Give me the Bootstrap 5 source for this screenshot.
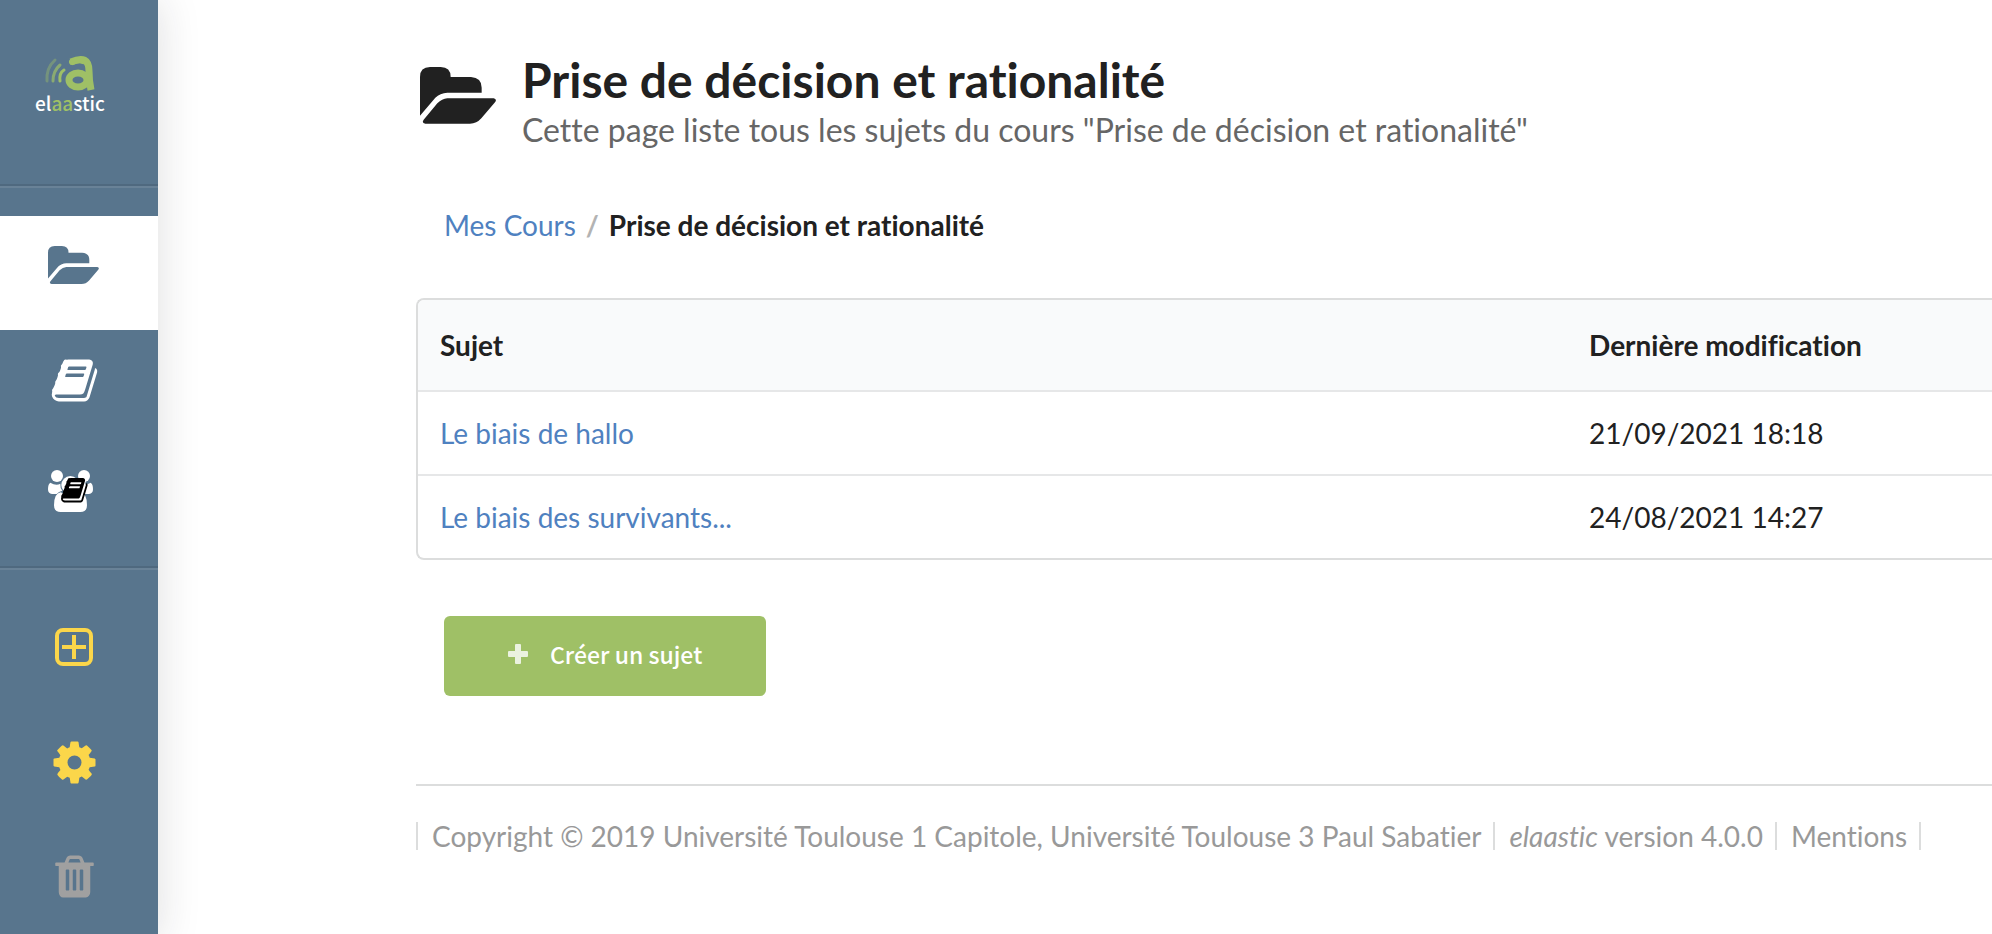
<!DOCTYPE html>
<html lang="fr">
<head>
<meta charset="utf-8">
<meta name="viewport" content="width=device-width, initial-scale=1">
<title>Prise de décision et rationalité - elaastic</title>
<link href="https://cdn.jsdelivr.net/npm/bootstrap@5.3.0/dist/css/bootstrap.min.css" rel="stylesheet">
<style>
  body { font-family: Lato, sans-serif; font-size: 28px; line-height: 36px; color: #212121; font-variant-ligatures: none; }
  a { color: #4f81c0; text-decoration: none; }
  .side-menu { width: 158px; background: #58758d; box-shadow: 0 0 40px rgba(34, 36, 38, .15); color: #fff; }
  .side-menu svg { display: block; }
  .side-logo { height: 184px; padding: 54px 0 0 32px; }
  .side-rule { border-top: 2px solid #4f697f; border-bottom: 2px solid #698297; margin-bottom: 28px; }
  .side-item { height: 114px; padding: 26px 0 0 50px; color: #fff; }
  .side-item.active { background: #fff; color: #58758d; padding-left: 48px; }
  .side-item.groups { height: 122px; padding-left: 48px; }
  .side-item.accent { color: #fbd64a; }
  .side-item.muted { color: #a0a0a0; }
  .page-body { padding: 56px 0 48px 258px; }
  .page-title { font-size: 48px; line-height: 48px; font-weight: 700; }
  .page-subtitle { font-size: 32px; line-height: 44px; color: #666; }
  .title-icon { width: 76px; height: 57px; margin: 11px 26px 0 4px; }
  .crumbs { --bs-breadcrumb-item-padding-x: 10px; --bs-breadcrumb-divider-color: #b3b3b3; padding: 55px 0 0 28px; margin-bottom: 55px; }
  .crumbs .active { color: #212121; }
  .topic-frame { border: 2px solid #dcdddd; border-right: 0; border-radius: 8px 0 0 8px; overflow: hidden; }
  .topic-table { --bs-table-color: #212121; margin: 0; }
  .topic-table > :not(caption) > * > * { padding: 23px 22px; border-bottom: 2px solid #e6e7e8; }
  .topic-table > thead > tr > th { padding: 27px 22px; background: #f9fafb; }
  .topic-table > tbody > tr:last-child > td { border-bottom: 0; }
  .topic-name { width: 73%; }
  .create-btn { --bs-btn-bg: #9fc066; --bs-btn-color: #fff; --bs-btn-border-width: 0; --bs-btn-hover-bg: #8fb254; --bs-btn-hover-color: #fff; --bs-btn-border-radius: 6px; --bs-btn-font-weight: 500;
    font-family: "Noto Sans CJK SC", sans-serif; font-size: 23px; line-height: 36px; padding: 20px 64px 24px; margin: 56px 0 88px 28px; gap: 22px; }
  .page-footer { border-top: 2px solid #dcdddd; padding-top: 36px; color: #999; line-height: 28px; }
  .page-footer a { color: inherit; }
  .page-footer li { padding: 0 12px 0 14px; border-right: 2px solid #dcdddd; }
  .page-footer li:first-child { border-left: 2px solid #dcdddd; }
</style>
</head>
<body>
<div class="d-flex min-vh-100 overflow-hidden">
  <nav class="side-menu flex-shrink-0" aria-label="Menu principal">
    <a class="side-logo d-block" href="#" aria-label="elaastic">
      <svg width="78" height="64" viewBox="0 0 78 64" fill="none" stroke-linecap="round">
        <g stroke="#9fc066">
          <path d="M15 27Q14 14 23 6" stroke-width="3" opacity=".4"/>
          <path d="M21 27Q21 17 28 11" stroke-width="3" opacity=".7"/>
          <path d="M28 27Q27 19 32 16" stroke-width="3"/>
          <path d="M39 8Q57 0 57 17Q57 26 59 36" stroke-width="7" stroke-linecap="butt"/>
          <path d="M40 8Q47 5 51 7" stroke-width="6"/>
          <ellipse cx="46" cy="26" rx="9" ry="7" stroke-width="7"/>
        </g>
        <text x="3" y="57" font-family="Noto Sans CJK SC, sans-serif" font-size="19" font-weight="500" fill="#fff">el<tspan fill="#9fc066">aa</tspan>stic</text>
      </svg>
    </a>
    <div class="side-rule"></div>
    <a class="side-item active d-block" href="#" aria-label="Mes cours">
      <svg width="51" height="48" viewBox="0 -18 228 215" fill="currentColor" preserveAspectRatio="xMinYMin"><path d="M0 146V30Q0 0 30 0H62Q92 0 92 30H153Q185 32 185 62V77H82Q60 78 46 92ZM82 94H221Q232 96 225 106L184 154Q170 170 150 170H16Q4 168 11 158L52 109Q66 95 82 94Z"/></svg>
    </a>
    <a class="side-item d-block" href="#" aria-label="Mes sujets">
      <svg width="49" height="49" viewBox="0 0 1792 1792" fill="currentColor"><path id="book" d="M1703 478q40 57 18 129l-275 906q-19 64-76.5 107.5t-122.5 43.5h-923q-77 0-148.5-53.5t-99.5-131.5q-24-67-2-127 0-4 3-27t4-37q1-8-3-21.5t-3-19.5q2-11 8-21t16.5-23.5 16.5-23.5q23-38 45-91.5t30-91.5q3-10 .5-30t-.5-28q3-11 17-28t17-23q21-36 42-92t25-90q1-9-2.5-32t.5-28q4-13 22-30.5t22-22.5q19-26 42.5-84.5t27.5-96.5q1-8-3-25.5t-2-26.5q2-8 9-18t18-23 17-21q8-12 16.5-30.5t15-35 16-36 19.5-32 26.5-23.5 36-11.5 47.5 5.5l-1 3q38-9 51-9h761q74 0 114 56t18 130l-274 906q-36 119-71.5 153.5t-128.5 34.5h-869q-27 0-38 15-11 16-1 43 24 70 144 70h923q29 0 56-15.5t35-41.5l300-987q7-22 5-57 38 15 59 43zm-1064 2q-4 13 2 22.5t20 9.5h608q13 0 25.5-9.5t16.5-22.5l21-64q4-13-2-22.5t-20-9.5h-608q-13 0-25.5 9.5t-16.5 22.5zm-83 256q-4 13 2 22.5t20 9.5h608q13 0 25.5-9.5t16.5-22.5l21-64q4-13-2-22.5t-20-9.5h-608q-13 0-25.5 9.5t-16.5 22.5z"/></svg>
    </a>
    <a class="side-item groups d-block" href="#" aria-label="Cours suivis">
      <svg width="45" height="42" viewBox="0 0 135 126" fill="currentColor"><circle cx="27" cy="18" r="18"/><circle cx="108" cy="18" r="18"/><path d="M7 38Q24 48 37 41Q36 54 43 62Q32 64 26 72H12Q0 71 0 58Q0 42 7 38ZM128 38Q111 48 98 41Q99 54 92 62Q103 64 109 72H123Q135 71 135 58Q135 42 128 38Z"/><circle cx="67" cy="45" r="27"/><path d="M38 67Q67 86 97 67Q117 70 117 106Q117 126 97 126H38Q18 126 18 106Q18 70 38 67Z"/><path d="M60 30H114L102 92H46Z"/><svg x="36" y="18" width="86" height="86" viewBox="0 0 1792 1792" fill="#000"><use href="#book"/></svg></svg>
    </a>
    <div class="side-rule"></div>
    <a class="side-item accent d-block" href="#" aria-label="Créer">
      <svg width="49" height="48" viewBox="0 0 49 48" fill="none" stroke="currentColor"><rect x="7" y="6" width="34" height="34" rx="6" stroke-width="4"/><path d="M24 11V35M12 23H36" stroke-width="4"/></svg>
    </a>
    <a class="side-item accent d-block" href="#" aria-label="Paramètres">
      <svg width="49" height="49" viewBox="0 0 1792 1792" fill="currentColor"><path d="M1152 896q0-106-75-181t-181-75-181 75-75 181 75 181 181 75 181-75 75-181zm512-109v222q0 12-8 23t-20 13l-185 28q-19 54-39 91 35 50 107 138 10 12 10 25t-9 23q-27 37-99 108t-94 71q-12 0-26-9l-138-108q-44 23-91 38-16 136-29 186-7 28-36 28h-222q-14 0-24.500-8.500t-11.500-21.500l-28-184q-49-16-90-37l-141 107q-10 9-25 9-14 0-25-11-126-114-165-168-7-10-7-23 0-12 8-23 15-21 51-66.500t54-70.500q-27-50-41-99l-183-27q-13-2-21-12.500t-8-23.500v-222q0-12 8-23t19-13l186-28q14-46 39-92-40-57-107-138-10-12-10-24 0-10 9-23 26-36 98.500-107.500t94.500-71.500q13 0 26 10l138 107q44-23 91-38 16-136 29-186 7-28 36-28h222q14 0 24.500 8.500t11.500 21.500l28 184q49 16 90 37l142-107q9-9 24-9 13 0 25 10 129 119 165 170 7 8 7 22 0 12-8 23-15 21-51 66.500t-54 70.500q26 50 41 98l183 28q13 2 21 12.500t8 23.500z"/></svg>
    </a>
    <a class="side-item muted d-block" href="#" aria-label="Corbeille">
      <svg width="49" height="49" viewBox="0 0 1792 1792" fill="currentColor"><path d="M704 1376v-704q0-14-9-23t-23-9h-64q-14 0-23 9t-9 23v704q0 14 9 23t23 9h64q14 0 23-9t9-23zm256 0v-704q0-14-9-23t-23-9h-64q-14 0-23 9t-9 23v704q0 14 9 23t23 9h64q14 0 23-9t9-23zm256 0v-704q0-14-9-23t-23-9h-64q-14 0-23 9t-9 23v704q0 14 9 23t23 9h64q14 0 23-9t9-23zm-544-992h448l-48-117q-7-9-17-11h-317q-10 2-17 11zm928 32v64q0 14-9 23t-23 9h-96v948q0 83-47 143.500t-113 60.500h-832q-66 0-113-58.500t-47-141.500v-952h-96q-14 0-23-9t-9-23v-64q0-14 9-23t23-9h309l70-167q15-37 54-63t79-26h320q40 0 79 26t54 63l70 167h309q14 0 23 9t9 23z"/></svg>
    </a>
  </nav>

  <main class="page-body flex-grow-1">
    <header class="d-flex align-items-start">
      <svg class="title-icon flex-shrink-0" viewBox="0 0 228 171" fill="currentColor" aria-hidden="true"><path d="M0 146V30Q0 0 30 0H62Q92 0 92 30H153Q185 32 185 62V77H82Q60 78 46 92ZM82 94H221Q232 96 225 106L184 154Q170 170 150 170H16Q4 168 11 158L52 109Q66 95 82 94Z"/></svg>
      <div>
        <h1 class="page-title mb-1">Prise de décision et rationalité</h1>
        <div class="page-subtitle">Cette page liste tous les sujets du cours "Prise de décision et rationalité"</div>
      </div>
    </header>

    <nav aria-label="Fil d'Ariane">
      <ol class="breadcrumb crumbs">
        <li class="breadcrumb-item"><a href="#">Mes Cours</a></li>
        <li class="breadcrumb-item active fw-bold" aria-current="page">Prise de décision et rationalité</li>
      </ol>
    </nav>

    <div class="topic-frame">
      <table class="table topic-table">
        <thead>
          <tr><th class="topic-name" scope="col">Sujet</th><th scope="col">Dernière modification</th></tr>
        </thead>
        <tbody>
          <tr><td><a href="#">Le biais de hallo</a></td><td>21/09/2021 18:18</td></tr>
          <tr><td><a href="#">Le biais des survivants...</a></td><td>24/08/2021 14:27</td></tr>
        </tbody>
      </table>
    </div>

    <button type="button" class="btn create-btn d-flex align-items-center">
      <svg width="20" height="20" viewBox="0 0 20 20" fill="#fff" opacity=".8" aria-hidden="true"><path d="M8 0H12Q13 0 13 1V7H19Q20 7 20 8V12Q20 13 19 13H13V19Q13 20 12 20H8Q7 20 7 19V13H1Q0 13 0 12V8Q0 7 1 7H7V1Q7 0 8 0Z"/></svg>
      Créer un sujet
    </button>

    <footer class="page-footer">
      <ul class="list-unstyled d-flex flex-wrap mb-0">
        <li>Copyright © 2019 Université Toulouse 1 Capitole, Université Toulouse 3 Paul Sabatier</li>
        <li><em>elaastic</em> version 4.0.0</li>
        <li><a href="#">Mentions</a></li>
      </ul>
    </footer>
  </main>
</div>
<script src="https://cdn.jsdelivr.net/npm/bootstrap@5.3.0/dist/js/bootstrap.bundle.min.js"></script>
</body>
</html>
